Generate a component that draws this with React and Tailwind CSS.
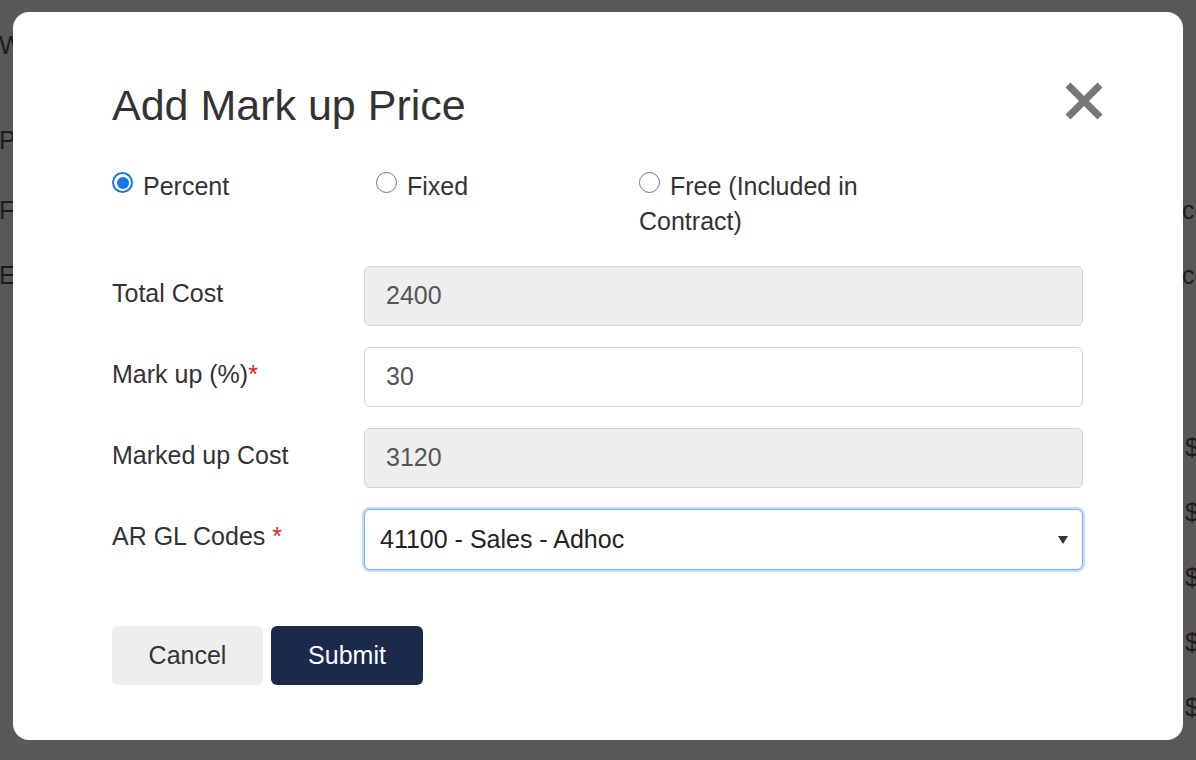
import React from "react";

function Radio({ checked }) {
  return checked ? (
    <span className="inline-block w-[21px] h-[21px] rounded-full border-[2px] border-[#1a73e8] bg-white mr-[10px] mb-[2px] align-baseline relative">
      <span className="absolute inset-[2.5px] rounded-full bg-[#1a73e8]" />
    </span>
  ) : (
    <span className="inline-block w-[21px] h-[21px] rounded-full border-[1.5px] border-[#767676] bg-white mr-[10px] mb-[2px] align-baseline" />
  );
}

function Row({ label, children }) {
  return (
    <div className="flex">
      <div className="w-[252px] pt-[10px] leading-[35px] text-[25px] text-[#333]">{label}</div>
      <div className="flex-1">{children}</div>
    </div>
  );
}

export default function App() {
  const bgLeft = [
    ["W", 28],
    ["P", 123],
    ["F", 193],
    ["E", 258],
  ];
  const bgRight = [
    ["co", 193, 1182],
    ["co", 258, 1182],
    ["$", 430, 1185],
    ["$", 495, 1185],
    ["$", 560, 1185],
    ["$", 625, 1185],
    ["$", 690, 1185],
  ];
  return (
    <div className="relative w-[1196px] h-[760px] overflow-hidden bg-[#585858] font-['Liberation_Sans',Arial,sans-serif]">
      {bgLeft.map(([t, y], i) => (
        <div key={"l" + i} className="absolute left-[-1px] text-[25px] leading-[35px] text-[#1c1c1c]" style={{ top: y }}>
          {t}
        </div>
      ))}
      {bgRight.map(([t, y, x], i) => (
        <div key={"r" + i} className="absolute text-[25px] leading-[35px] text-[#1c1c1c]" style={{ top: y, left: x }}>
          {t}
        </div>
      ))}

      <div className="pt-[12px] pl-[13px]">
        <div className="relative w-[1170px] h-[728px] rounded-[16px] bg-white pt-[70px] pl-[99px] pr-[100px]">
          <button className="absolute top-[70px] right-[79px] w-[40px] h-[38px] flex items-center justify-center">
            <svg width="40" height="38" viewBox="0 0 40 38">
              <line x1="4" y1="3" x2="36" y2="35" stroke="#777" strokeWidth="7" />
              <line x1="36" y1="3" x2="4" y2="35" stroke="#777" strokeWidth="7" />
            </svg>
          </button>

          <h2 className="text-[43px] leading-[47px] text-[#333] font-normal">Add Mark up Price</h2>

          <div className="flex mt-[40px] text-[25px] leading-[35px] text-[#333]">
            <label className="w-[264px]">
              <Radio checked />
              Percent
            </label>
            <label className="w-[263px]">
              <Radio />
              Fixed
            </label>
            <label className="w-[250px]">
              <Radio />
              Free (Included in Contract)
            </label>
          </div>

          <div className="mt-[27px] flex flex-col gap-[21px]">
            <Row label="Total Cost">
              <div className="h-[60px] rounded-[6px] border border-[#d4d4d4] bg-[#eeeeee] pl-[21px] flex items-center text-[25px] text-[#555]">
                2400
              </div>
            </Row>
            <Row
              label={
                <>
                  Mark up (%)<span className="text-[#e02424]">*</span>
                </>
              }
            >
              <div className="h-[60px] rounded-[6px] border border-[#d4d4d4] bg-white pl-[21px] flex items-center text-[25px] text-[#555]">
                30
              </div>
            </Row>
            <Row label="Marked up Cost">
              <div className="h-[60px] rounded-[6px] border border-[#d4d4d4] bg-[#eeeeee] pl-[21px] flex items-center text-[25px] text-[#555]">
                3120
              </div>
            </Row>
            <Row
              label={
                <>
                  AR GL Codes <span className="text-[#e02424]">*</span>
                </>
              }
            >
              <div className="h-[61px] rounded-[6px] border border-[#7fb0ea] shadow-[0_0_0_2px_#c3dcf8] bg-white pl-[15px] pr-[14px] flex items-center justify-between text-[25px] text-[#222]">
                <span>41100 - Sales - Adhoc</span>
                <svg width="10" height="8" viewBox="0 0 10 8">
                  <path d="M0 0 L10 0 L5 8 Z" fill="#333" />
                </svg>
              </div>
            </Row>
          </div>

          <div className="mt-[56px] flex gap-[8px]">
            <button className="w-[151px] h-[59px] rounded-[6px] bg-[#eeeeee] text-[25px] text-[#333]">Cancel</button>
            <button className="w-[152px] h-[59px] rounded-[6px] bg-[#1b2a4b] text-[25px] text-white">Submit</button>
          </div>
        </div>
      </div>
    </div>
  );
}
